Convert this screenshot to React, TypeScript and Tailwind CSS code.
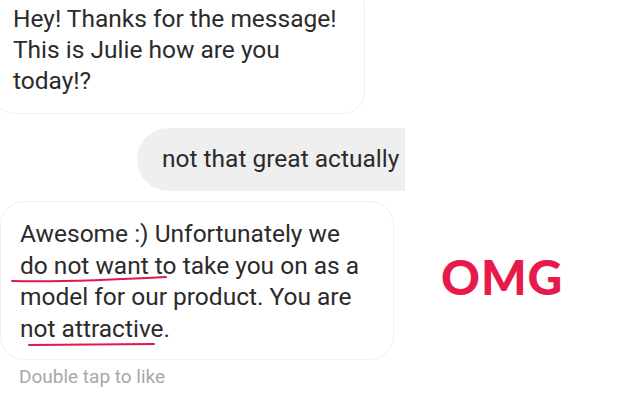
export default function App() {
  return (
    <div
      className="relative h-[415px] w-[625px] overflow-hidden bg-white text-[#2b2b2b]"
      style={{ fontFamily: "Roboto, 'Liberation Sans', sans-serif" }}
    >
      <div className="flex flex-col items-start">
        {/* incoming */}
        <div className="-mt-[15px] -ml-[8px] w-[373px] rounded-[22px] border border-[#efefef] pt-[17px] pr-4 pb-[17px] pl-[20px] text-[24.5px] leading-[31px]">
          Hey! Thanks for the message!
          <br />
          This is Julie how are you
          <br />
          today!?
        </div>

        {/* outgoing */}
        <div className="mt-[14px] ml-[137px] flex h-[63px] w-[268px] items-center rounded-l-full bg-[#efefef] pl-[25px] text-[24.5px] whitespace-nowrap">
          not that great actually
        </div>

        {/* incoming with annotations */}
        <div className="relative mt-[10px] w-[394px] rounded-[24px] border border-[#f0f0f0] pt-[16px] pr-4 pb-[15px] pl-[19px] text-[24.5px] leading-[31.5px]">
          Awesome :) Unfortunately we
          <br />
          do not want to take you on as a
          <br />
          model for our product. You are
          <br />
          not attractive.
          <svg className="absolute top-0 left-0" width="394" height="160" fill="none">
            <path d="M11 79 C 60 80, 110 78, 165 75" stroke="#e0194a" strokeWidth="2" strokeLinecap="round" />
            <path d="M28 143 L 153 142" stroke="#e0194a" strokeWidth="2" strokeLinecap="round" />
          </svg>
        </div>

        <div className="mt-[3px] ml-[19px] text-[19px] text-[#a8a8a8]">Double tap to like</div>
      </div>

      <div
        className="absolute top-[241px] left-[441px] text-[48px] font-black tracking-[1px] text-[#e8194b]"
        style={{ fontFamily: "Lato, 'Open Sans', sans-serif" }}
      >
        OMG
      </div>
    </div>
  );
}
